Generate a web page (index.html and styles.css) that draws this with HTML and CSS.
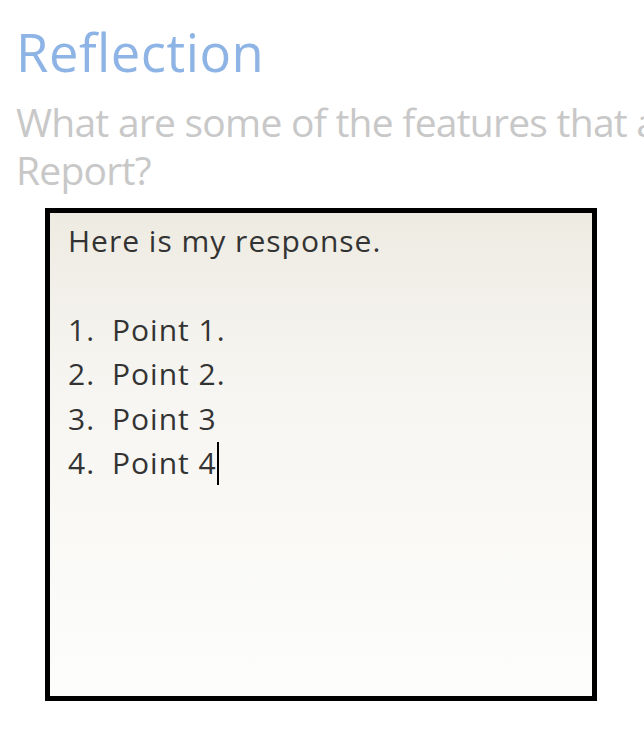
FILE: index.html
```html
<!DOCTYPE html>
<html>
<head>
<meta charset="utf-8">
<link rel="stylesheet" href="styles.css">
</head>
<body>
<main class="page">
  <h1 class="title">Reflection</h1>
  <div class="question">
    <div class="qline">What are some of the features that are included in a Lab</div>
    <div class="qline">Report?</div>
  </div>
  <div class="answer">
    <div class="line">Here is my response.</div>
    <div class="line empty">&nbsp;</div>
    <div class="line item"><span class="num">1.</span><span>Point 1.</span></div>
    <div class="line item"><span class="num">2.</span><span>Point 2.</span></div>
    <div class="line item"><span class="num">3.</span><span>Point 3</span></div>
    <div class="line item"><span class="num">4.</span><span>Point 4<span class="caret"></span></span></div>
  </div>
</main>
</body>
</html>
```
FILE: styles.css
```css
html, body {
  margin: 0;
  padding: 0;
  background: #ffffff;
  overflow: hidden;
}
.page {
  font-family: "Open Sans", "Noto Sans", sans-serif;
  padding: 0 0 0 16px;
  width: 628px;
}
.title {
  margin: 20.6px 0 0 0;
  font-size: 52.5px;
  letter-spacing: 0.5px;
  line-height: 62.4px;
  font-weight: 400;
  color: #8db4e5;
}
.question {
  margin-top: 14.6px;
  font-size: 39px;
  letter-spacing: -0.75px;
  line-height: 48.5px;
  color: #c8c8c8;
}
.qline {
  white-space: nowrap;
}
.answer {
  margin: 13.4px 0 0 29px;
  width: 524px;
  height: 477px;
  border: 5px solid #000;
  background: linear-gradient(to bottom, #eeebe2 0%, #f6f5f1 35%, #fdfdfc 100%);
  padding: 6px 0 0 18px;
  box-sizing: content-box;
  font-size: 30px;
  letter-spacing: 1px;
  line-height: 44.4px;
  color: #333;
}
.item {
  display: flex;
}
.num {
  width: 44px;
  flex: none;
}
.caret {
  display: inline-block;
  width: 2px;
  height: 43px;
  background: #000;
  vertical-align: -11px;
  margin-left: 0;
}
```
